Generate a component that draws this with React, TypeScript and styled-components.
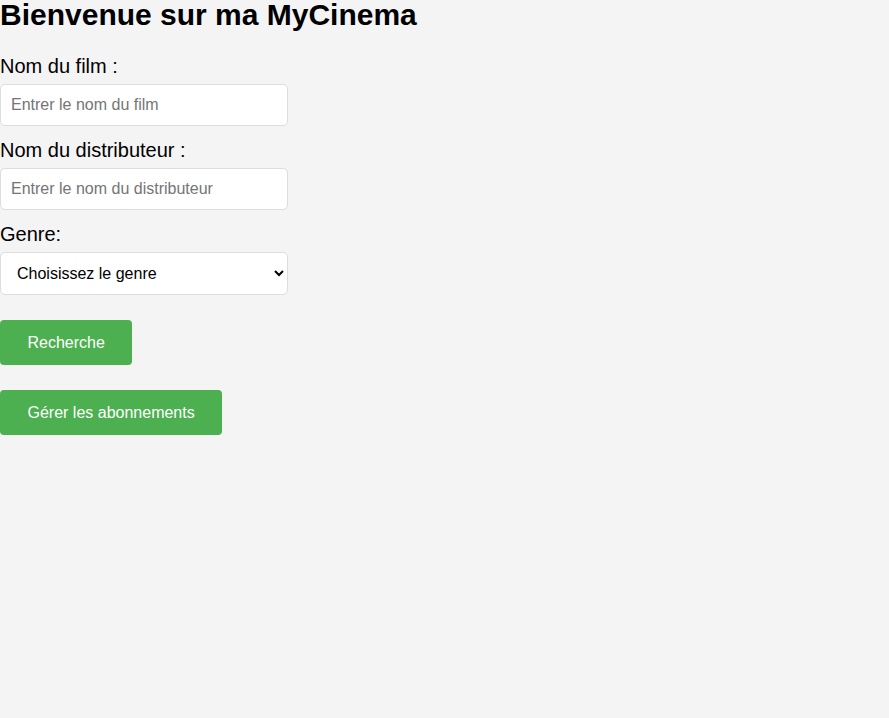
import React from "react";
import styled, { createGlobalStyle } from "styled-components";

const GlobalStyle = createGlobalStyle`
  html, body {
    margin: 0;
    padding: 0;
    background: #f4f4f4;
    font-family: "Liberation Sans", Arial, sans-serif;
    color: #000;
  }
`;

const Page = styled.div`
  display: flex;
  flex-direction: column;
  align-items: flex-start;
`;

const Title = styled.h1`
  margin: 0 0 25px;
  font-size: 30px;
  line-height: 30px;
  font-weight: bold;
`;

const Form = styled.form`
  display: flex;
  flex-direction: column;
  align-items: flex-start;
  width: 288px;
`;

const Field = styled.div<{ $last?: boolean }>`
  display: flex;
  flex-direction: column;
  gap: 6px;
  width: 100%;
  margin-bottom: ${(p) => (p.$last ? 0 : 13)}px;
`;

const Label = styled.label`
  font-size: 20px;
  line-height: 23px;
  height: 23px;
`;

const TextInput = styled.input`
  box-sizing: border-box;
  width: 100%;
  height: 42px;
  padding: 0 10px;
  border: 1px solid #ddd;
  border-radius: 5px;
  background: #fff;
  font-family: "Liberation Sans", Arial, sans-serif;
  font-size: 16px;
  color: #000;
  outline: none;
  &::placeholder {
    color: #757575;
  }
`;

const Select = styled.select`
  box-sizing: border-box;
  width: 100%;
  height: 43px;
  padding: 0 8px 0 12px;
  border: 1px solid #ddd;
  border-radius: 5px;
  background: #fff;
  font-family: "Liberation Sans", Arial, sans-serif;
  font-size: 16px;
  color: #000;
  outline: none;
`;

const Button = styled.button`
  box-sizing: border-box;
  height: 45px;
  margin-top: 25px;
  padding: 0 27.5px;
  border: none;
  border-radius: 4px;
  background: #4caf50;
  color: #fff;
  font-family: "Liberation Sans", Arial, sans-serif;
  font-size: 16px;
  cursor: pointer;
`;

export default function App() {
  return (
    <>
      <GlobalStyle />
      <Page>
        <Title>Bienvenue sur ma MyCinema</Title>
        <Form onSubmit={(e) => e.preventDefault()}>
          <Field>
            <Label htmlFor="film">Nom du film :</Label>
            <TextInput id="film" type="text" placeholder="Entrer le nom du film" />
          </Field>
          <Field>
            <Label htmlFor="distrib">Nom du distributeur :</Label>
            <TextInput id="distrib" type="text" placeholder="Entrer le nom du distributeur" />
          </Field>
          <Field $last>
            <Label htmlFor="genre">Genre:</Label>
            <Select id="genre" defaultValue="">
              <option value="">Choisissez le genre</option>
              <option value="action">Action</option>
              <option value="comedie">Comédie</option>
              <option value="drame">Drame</option>
            </Select>
          </Field>
          <Button type="submit">Recherche</Button>
        </Form>
        <Button type="button">Gérer les abonnements</Button>
      </Page>
    </>
  );
}
